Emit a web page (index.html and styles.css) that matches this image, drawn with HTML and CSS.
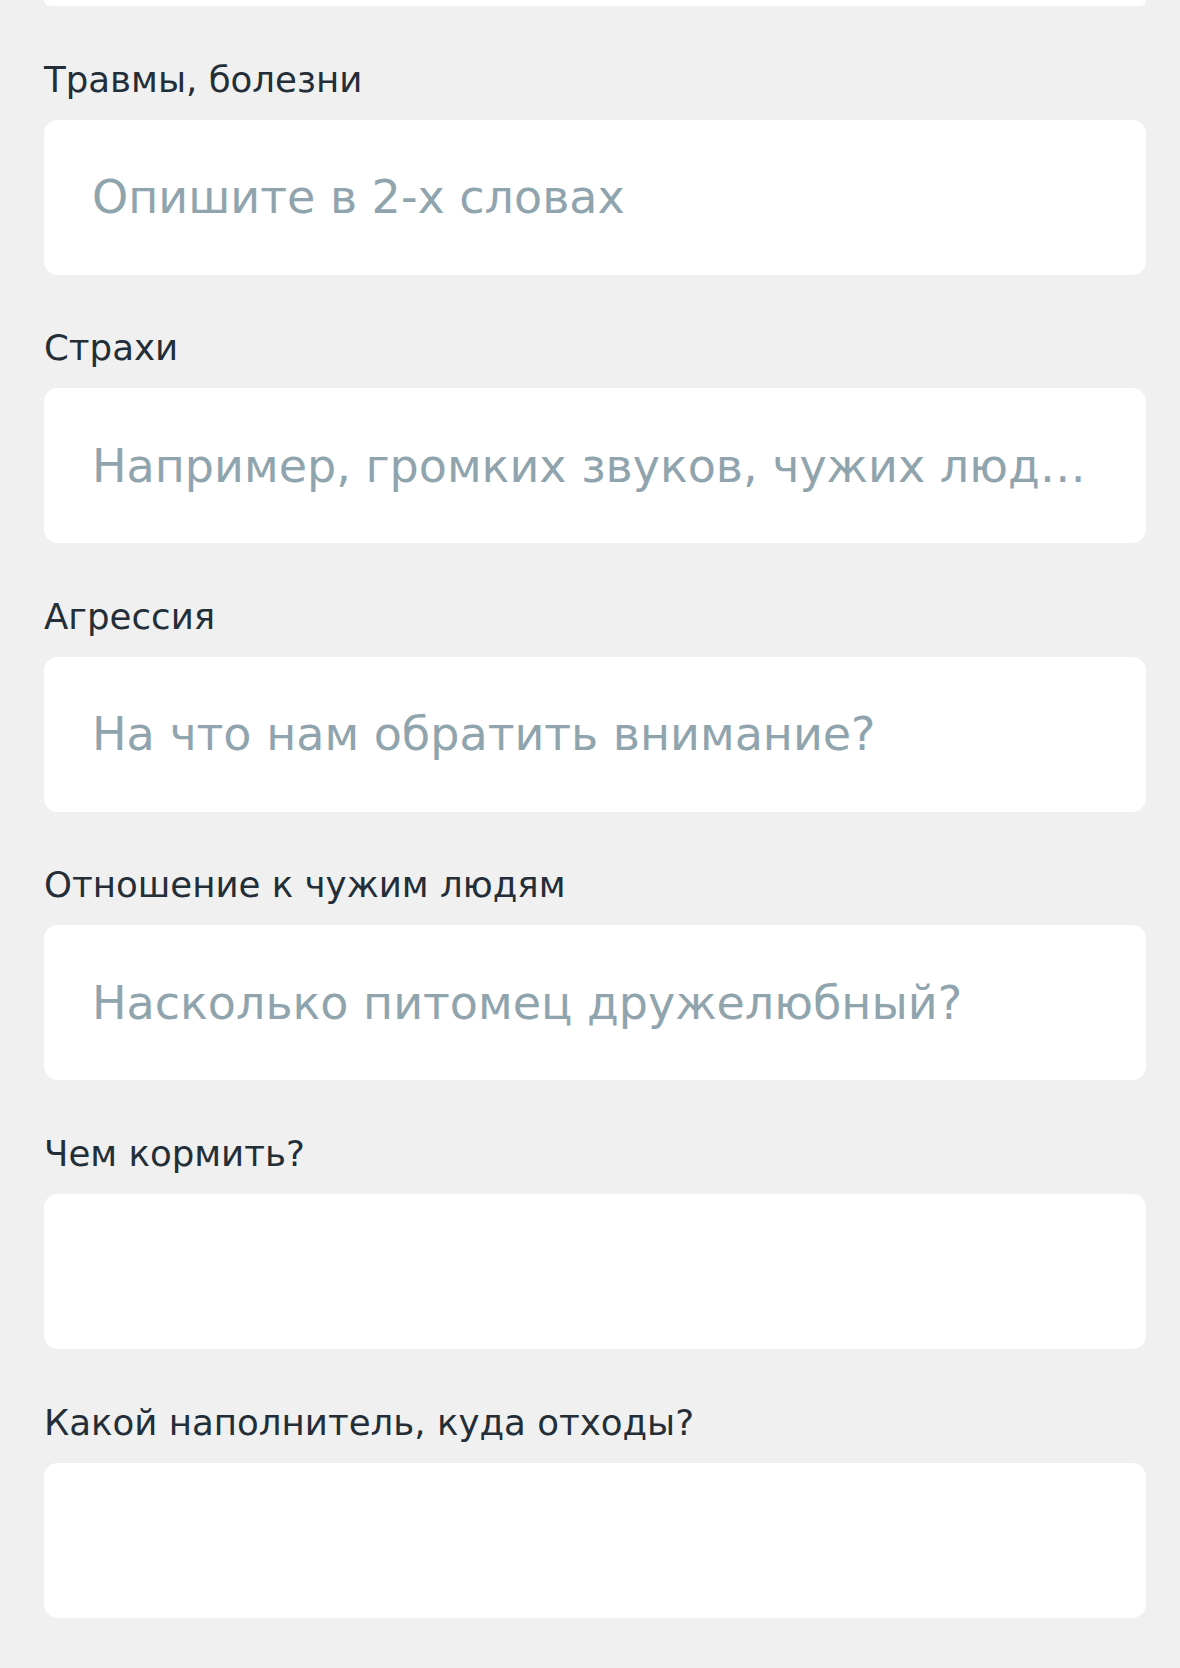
FILE: index.html
```html
<!DOCTYPE html>
<html lang="ru">

<head>
    <meta charset="UTF-8">
    <meta name="viewport" content="width=device-width, initial-scale=1.0">
    <title>Анкета питомца</title>
    <link rel="stylesheet" href="styles.css">
</head>

<body>
    <form id="pet-form">
        <!-- previous field, scrolled out of view -->
        <div class="field-tail"></div>

        <div class="form-group">
            <label for="injuries">Травмы, болезни</label>
            <input type="text" id="injuries" name="injuries" placeholder="Опишите в 2-х словах">
        </div>
        <div class="form-group">
            <label for="fears">Страхи</label>
            <input type="text" id="fears" name="fears" placeholder="Например, громких звуков, чужих людей">
        </div>
        <div class="form-group">
            <label for="aggression">Агрессия</label>
            <input type="text" id="aggression" name="aggression" placeholder="На что нам обратить внимание?">
        </div>
        <div class="form-group">
            <label for="strangers">Отношение к чужим людям</label>
            <input type="text" id="strangers" name="strangers" placeholder="Насколько питомец дружелюбный?">
        </div>
        <div class="form-group">
            <label for="food">Чем кормить?</label>
            <input type="text" id="food" name="food">
        </div>
        <div class="form-group">
            <label for="litter">Какой наполнитель, куда отходы?</label>
            <input type="text" id="litter" name="litter">
        </div>
    </form>
</body>

</html>
```

FILE: styles.css
```css
body {
    font-family: "DejaVu Sans", Verdana, sans-serif;
    background-color: #f0f0f0;
    margin: 0;
}

#pet-form {
    display: flex;
    flex-direction: column;
    gap: 52.6px;
    padding: 0 34px 0 44px;
}

.field-tail {
    height: 6px;
    background-color: #fff;
    border-radius: 0 0 14px 14px;
}

.form-group {
    display: flex;
    flex-direction: column;
    gap: 19px;
}

.form-group label {
    display: block;
    font-size: 35.6px;
    line-height: 42px;
    color: #232e38;
}

.form-group input {
    box-sizing: border-box;
    width: 100%;
    height: 155px;
    padding: 0 56px 0 48px;
    font-family: inherit;
    font-size: 46px;
    color: #232e38;
    background-color: #fff;
    border: none;
    border-radius: 14px;
    outline: none;
    text-overflow: ellipsis;
}

.form-group input::placeholder {
    color: #90a4ae;
    opacity: 1;
}
```
